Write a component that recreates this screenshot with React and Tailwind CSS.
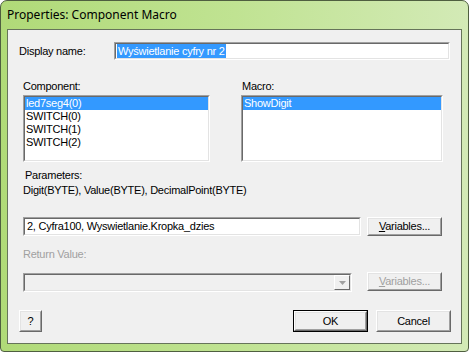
import React from 'react';

// classic win32 3d edges
function Sunken({ className = '', innerClass = '', children }) {
  return (
    <div className={`border border-t-[#a0a0a0] border-l-[#a0a0a0] border-r-white border-b-white ${className}`}>
      <div className={`h-full border border-t-[#696969] border-l-[#696969] border-r-[#e3e3e3] border-b-[#e3e3e3] ${innerClass}`}>
        {children}
      </div>
    </div>
  );
}

function Button({ className = '', disabled = false, isDefault = false, children }) {
  const face = (
    <div className="h-full border border-t-white border-l-white border-r-[#696969] border-b-[#696969]">
      <div
        className={`h-full flex items-center justify-center border border-t-[#e3e3e3] border-l-[#e3e3e3] border-r-[#a0a0a0] border-b-[#a0a0a0] bg-[#f0f0f0] ${
          disabled ? 'text-[#a0a0a0]' : 'text-black'
        }`}
      >
        {children}
      </div>
    </div>
  );
  if (isDefault) {
    return <div className={`border border-black ${className}`}>{face}</div>;
  }
  return <div className={className}>{face}</div>;
}

function ListBox({ items, className = '' }) {
  return (
    <Sunken className={className} innerClass="bg-white">
      <div className="flex flex-col">
        {items.map((item, i) => (
          <div
            key={item}
            className={`h-[13px] leading-[13px] pl-[1px] ${i === 0 ? 'bg-[#3399ff] text-white' : 'text-black'}`}
          >
            {item}
          </div>
        ))}
      </div>
    </Sunken>
  );
}

export default function App() {
  return (
    <div
      className="w-[469px] h-[352px] rounded-t-[7px] rounded-b-[4px] border border-[#4f5f40] bg-gradient-to-r from-[#b0da78] via-[#c0e392] to-[#d3eab6] flex flex-col px-[6px] pb-[7px]"
      style={{ fontFamily: '"Liberation Sans", Arial, sans-serif' }}
    >
      {/* title bar */}
      <div className="h-[28px] flex items-center text-[12px] text-black" style={{ fontFamily: '"Noto Sans", "Liberation Sans", sans-serif' }}>
        Properties: Component Macro
      </div>

      {/* client area */}
      <div className="flex-1 border border-[#66745a] bg-[#f0f0f0] text-[11px] tracking-[-0.25px] text-black flex flex-col pl-[15px] pr-[9px]">
        {/* display name */}
        <div className="flex items-center mt-[12px] h-[18px]">
          <div className="w-[91px] -ml-[4px]">Display name:</div>
          <Sunken className="w-[336px] h-[18px] ml-[4px]" innerClass="bg-white flex items-center pl-[1px]">
            <span className="bg-[#3399ff] text-white px-[1px] leading-[14px]">Wyświetlanie cyfry nr 2</span>
          </Sunken>
        </div>

        {/* labels */}
        <div className="flex mt-[19px] h-[14px] leading-[14px]">
          <div className="w-[218px]">Component:</div>
          <div className="pl-[1px]">Macro:</div>
        </div>

        {/* lists */}
        <div className="flex mt-[2px]">
          <ListBox className="w-[187px] h-[67px]" items={['led7seg4(0)', 'SWITCH(0)', 'SWITCH(1)', 'SWITCH(2)']} />
          <ListBox className="w-[202px] h-[67px] ml-[31px]" items={['ShowDigit']} />
        </div>

        <div className="mt-[7px] pl-[2px] leading-[13px]">Parameters:</div>
        <div className="leading-[14px] mt-[1px]">Digit(BYTE), Value(BYTE), DecimalPoint(BYTE)</div>

        {/* parameter row */}
        <div className="flex mt-[20px]">
          <Sunken className="w-[338px] h-[19px]" innerClass="bg-white flex items-center pl-[2px]">
            2, Cyfra100, Wyswietlanie.Kropka_dzies
          </Sunken>
          <Button className="w-[75px] h-[19px] ml-[6px]">
            <span>
              <span className="underline">V</span>ariables...
            </span>
          </Button>
        </div>

        <div className="mt-[11px] text-[#a0a0a0] leading-[14px]">Return Value:</div>

        {/* return value row */}
        <div className="flex items-start mt-[11px]">
          <Sunken className="w-[329px] h-[19px] mt-[1px]" innerClass="bg-[#f0f0f0] flex justify-end items-stretch">
            <div className="w-[16px] border border-t-white border-l-white border-r-[#696969] border-b-[#696969] flex items-center justify-center">
              <svg width="7" height="4" viewBox="0 0 7 4">
                <path d="M0 0h7L3.5 4z" fill="#a0a0a0" />
              </svg>
            </div>
          </Sunken>
          <Button disabled className="w-[75px] h-[19px] ml-[15px]">
            <span>
              <span className="underline">V</span>ariables...
            </span>
          </Button>
        </div>

        {/* bottom buttons */}
        <div className="flex mt-[18px] -ml-[4px]">
          <Button className="w-[23px] h-[22px]">
            <span className="text-black">?</span>
          </Button>
          <Button isDefault className="w-[75px] h-[22px] ml-[251px]">OK</Button>
          <Button className="w-[75px] h-[22px] ml-[8px]">Cancel</Button>
        </div>
      </div>
    </div>
  );
}
